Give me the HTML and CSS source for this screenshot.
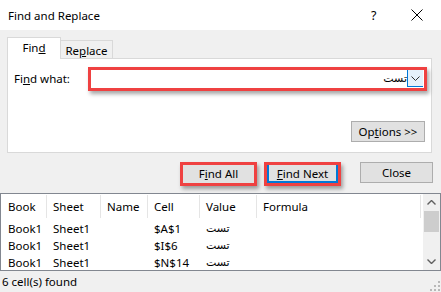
FILE: index.html
```html
<!DOCTYPE html>
<html lang="en">
<head>
<meta charset="utf-8">
<title>Find and Replace</title>
<link rel="stylesheet" href="styles.css">
</head>
<body>
<div class="window">
  <div class="titlebar">
    <span class="title">Find and Replace</span>
    <span class="help">?</span>
    <svg class="close-x" width="12" height="12" viewBox="0 0 12 12"><path d="M0.5 0.5 L11.5 11.5 M11.5 0.5 L0.5 11.5" stroke="#000" stroke-width="1" fill="none"/></svg>
  </div>
  <div class="content">
    <div class="tabs">
      <div class="tab active">Fin<u>d</u></div>
      <div class="tab">Re<u>p</u>lace</div>
    </div>
    <div class="panel">
      <div class="find-row">
        <span class="label">Fi<u>n</u>d what:</span>
        <div class="hl hl-input">
          <div class="combo">
            <span class="combo-text" dir="rtl">تست</span>
            <span class="combo-btn"><svg width="9" height="5" viewBox="0 0 9 5"><path d="M0.5 0.5 L4.5 4.5 L8.5 0.5" stroke="#333" stroke-width="1" fill="none"/></svg></span>
          </div>
        </div>
      </div>
      <div class="options-row">
        <div class="btn btn-options">Op<u>t</u>ions &gt;&gt;</div>
      </div>
    </div>
    <div class="actions">
      <div class="hl hl-btn"><div class="btn-inner">F<u>i</u>nd All</div></div>
      <div class="hl hl-btn hl-next"><div class="btn-inner default"><u>F</u>ind Next</div></div>
      <div class="btn btn-close">Close</div>
    </div>
  </div>
  <div class="results">
    <div class="list">
      <div class="grid header">
        <div class="c">Book</div><div class="c">Sheet</div><div class="c">Name</div><div class="c">Cell</div><div class="c">Value</div><div class="c">Formula</div>
      </div>
      <div class="grid row">
        <div class="c">Book1</div><div class="c">Sheet1</div><div class="c"></div><div class="c">$A$1</div><div class="c ar">تست</div><div class="c"></div>
      </div>
      <div class="grid row">
        <div class="c">Book1</div><div class="c">Sheet1</div><div class="c"></div><div class="c">$I$6</div><div class="c ar">تست</div><div class="c"></div>
      </div>
      <div class="grid row">
        <div class="c">Book1</div><div class="c">Sheet1</div><div class="c"></div><div class="c">$N$14</div><div class="c ar">تست</div><div class="c"></div>
      </div>
    </div>
    <div class="scrollbar">
      <div class="arrow"><svg width="9" height="5" viewBox="0 0 9 5"><path d="M0.5 4.5 L4.5 0.5 L8.5 4.5" stroke="#606060" stroke-width="1.4" fill="none"/></svg></div>
      <div class="thumb"></div>
      <div class="track"></div>
      <div class="arrow"><svg width="9" height="5" viewBox="0 0 9 5"><path d="M0.5 0.5 L4.5 4.5 L8.5 0.5" stroke="#606060" stroke-width="1.4" fill="none"/></svg></div>
    </div>
  </div>
  <div class="status">
    <span>6 cell(s) found</span>
    <svg class="grip" width="10" height="10" viewBox="0 0 10 10" fill="#b8b8b8"><rect x="8" y="0" width="2" height="2"/><rect x="4" y="4" width="2" height="2"/><rect x="8" y="4" width="2" height="2"/><rect x="0" y="8" width="2" height="2"/><rect x="4" y="8" width="2" height="2"/><rect x="8" y="8" width="2" height="2"/></svg>
  </div>
</div>
</body>
</html>
```
FILE: styles.css
```css
* { box-sizing: border-box; }
html, body { margin: 0; padding: 0; }
body {
  width: 441px;
  height: 292px;
  overflow: hidden;
  font-family: "Noto Sans", "DejaVu Sans", sans-serif;
  font-size: 11.5px;
  color: #000;
  background: #f0f0f0;
}
u { text-decoration: underline; text-underline-offset: 1px; }
.window { width: 441px; height: 292px; display: flex; flex-direction: column; }

.titlebar {
  height: 30px;
  background: #fff;
  display: flex;
  align-items: center;
  padding-left: 8px;
}
.title { flex: 1; font-size: 11.5px; }
.help { width: 8px; margin-right: 32px; font-size: 12.5px; }
.close-x { margin-right: 18px; }

.content { padding: 7px 8px 0 7px; }
.tabs { display: flex; align-items: flex-end; height: 21px; }
.tab {
  height: 18px;
  width: 52px;
  border: 1px solid #d9d9d9;
  border-bottom: none;
  border-left: none;
  background: #f0f0f0;
  display: flex;
  align-items: center;
  justify-content: center;
  padding-top: 1px;
}
.tab.active {
  height: 22px;
  width: 54px;
  border-left: 1px solid #d9d9d9;
  background: #fff;
  margin-bottom: -1px;
  position: relative;
  z-index: 1;
  padding-top: 0;
  padding-bottom: 2px;
}

.panel {
  width: 425px;
  height: 95px;
  background: #fff;
  border: 1px solid #d9d9d9;
  display: flex;
  flex-direction: column;
}
.find-row {
  display: flex;
  align-items: center;
  margin-top: 8px;
  padding-left: 6px;
}
.label { width: 74px; padding-bottom: 2px; }

.hl {
  border: 3px solid #ef4141;
  box-shadow: 2px 3px 4px rgba(0,0,0,0.35);
}
.hl-input { width: 339px; height: 24px; }
.combo {
  height: 100%;
  display: flex;
  background: #fff;
}
.combo-text {
  flex: 1;
  text-align: right;
  font-family: "DejaVu Sans", sans-serif;
  font-size: 11px;
  line-height: 18px;
  padding-right: 0;
}
.combo-btn {
  width: 16px;
  height: 17px;
  margin-right: 1px;
  border-left: 1px solid #0078d7;
  border-bottom: 1px solid #0078d7;
  background: #e5f1fb;
  display: flex;
  align-items: center;
  justify-content: center;
}

.options-row {
  display: flex;
  justify-content: flex-end;
  margin-top: 30px;
  padding-right: 6px;
}
.btn {
  height: 21px;
  background: #e1e1e1;
  border: 1px solid #adadad;
  display: flex;
  align-items: center;
  justify-content: center;
  padding-bottom: 1px;
}
.btn-options { width: 74px; }

.actions {
  display: flex;
  justify-content: flex-end;
  align-items: flex-start;
  margin-top: 9px;
  height: 24px;
}
.hl-btn { width: 77px; height: 24px; margin-right: 7px; }
.hl-next { margin-right: 19px; }
.btn-inner {
  height: 100%;
  background: #e1e1e1;
  display: flex;
  align-items: center;
  justify-content: center;
  padding-bottom: 1px;
}
.btn-inner.default {
  border-left: 2px solid #0078d7;
  border-right: 2px solid #0078d7;
  border-bottom: 2px solid #0078d7;
  padding-bottom: 0;
}
.btn-close { width: 73px; }

.results {
  margin-top: 7px;
  height: 78px;
  border: 1px solid #828790;
  background: #fff;
  display: flex;
}
.list { flex: 1; }
.grid {
  display: grid;
  grid-template-columns: 45px 54px 47px 52px 57px 165px;
}
.header { height: 26px; padding-top: 1px; }
.header .c {
  height: 23px;
  display: flex;
  align-items: center;
  padding-left: 6px;
  border-left: 1px solid #e5e5e5;
  padding-bottom: 1px;
}
.header .c:first-child { border-left: none; padding-left: 7px; }
.header .c:last-child { border-right: 1px solid #e5e5e5; }
.row { height: 17px; }
.row .c {
  display: flex;
  align-items: center;
  padding-left: 7px;
  white-space: nowrap;
  padding-bottom: 1px;
}
.row .ar { font-family: "DejaVu Sans", sans-serif; font-size: 11px; }

.scrollbar {
  width: 17px;
  background: #f0f0f0;
  display: flex;
  flex-direction: column;
}
.arrow { height: 17px; display: flex; align-items: center; justify-content: center; }
.thumb { height: 21px; margin: 0 1px; background: #cdcdcd; }
.track { flex: 1; }

.status {
  flex: 1;
  display: flex;
  align-items: center;
  justify-content: space-between;
  padding-left: 2px;
  padding-right: 1px;
}
.status span { padding-bottom: 1px; }
.grip { align-self: flex-end; margin-bottom: 1px; }
```
